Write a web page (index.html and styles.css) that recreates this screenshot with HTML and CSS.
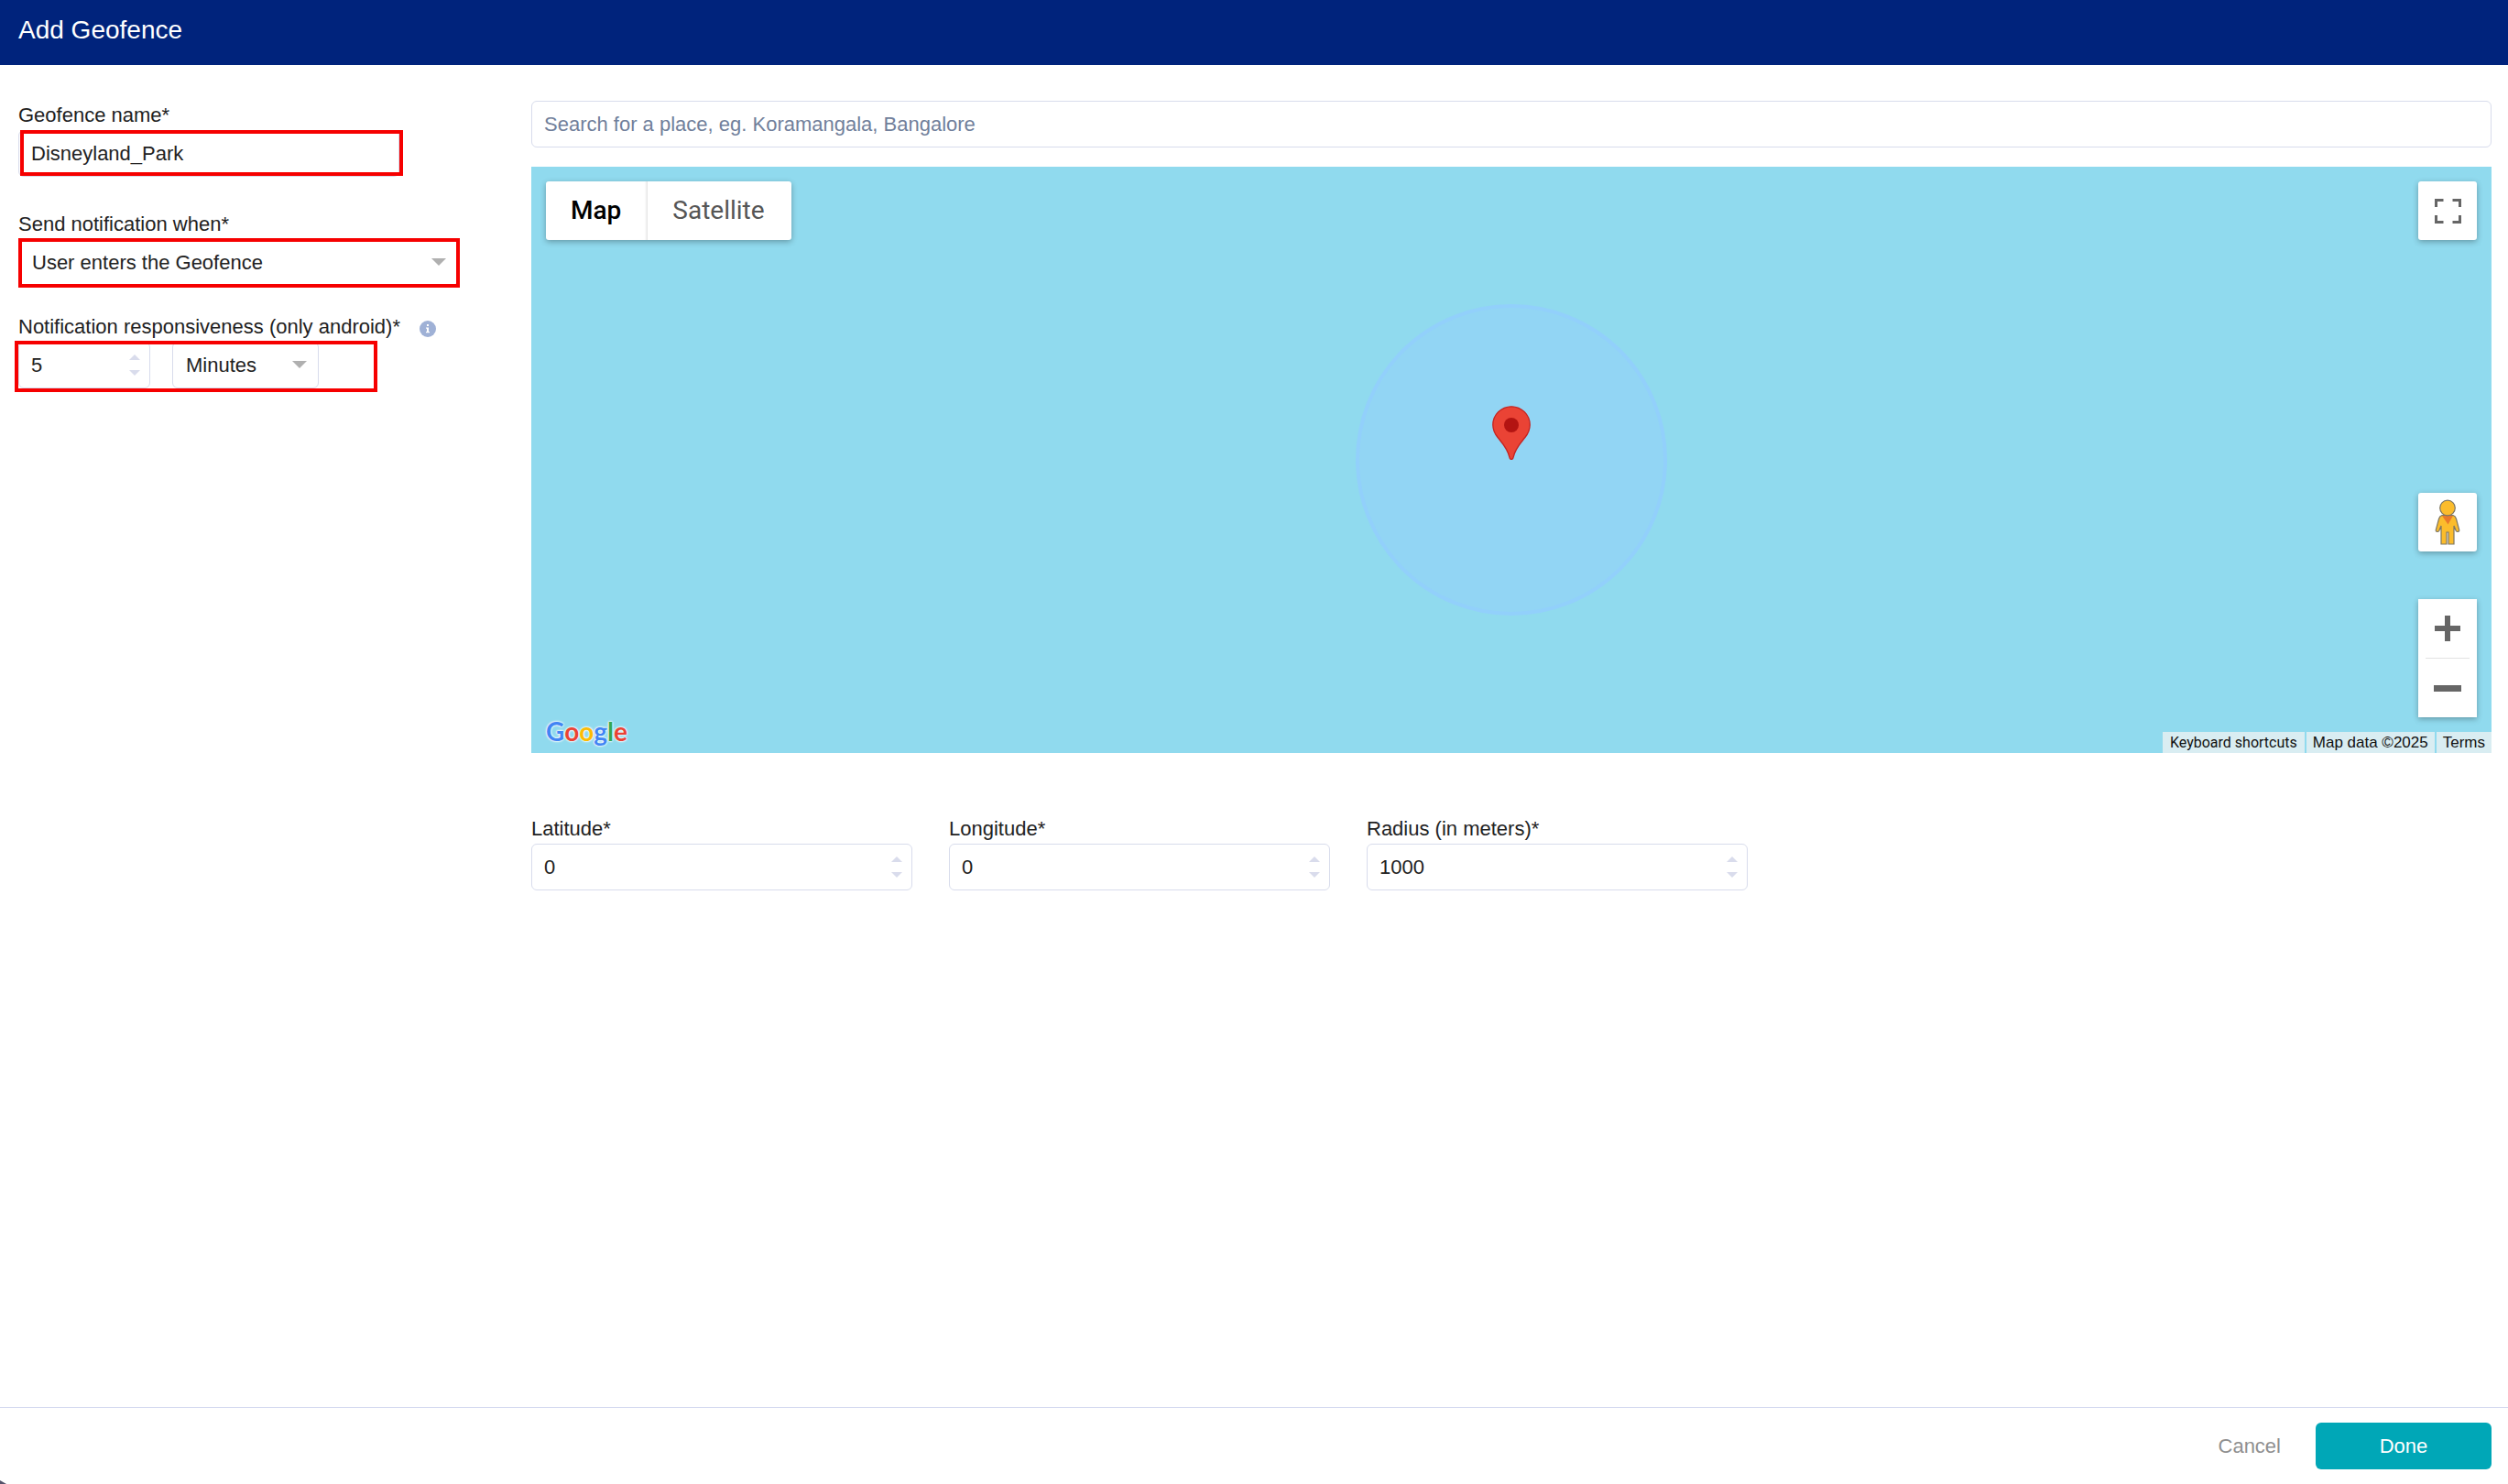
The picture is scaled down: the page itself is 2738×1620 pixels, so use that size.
FILE: index.html
```html
<!DOCTYPE html>
<html lang="en">
<head>
<meta charset="utf-8">
<meta name="viewport" content="width=device-width, initial-scale=1">
<title>Add Geofence</title>
<link rel="stylesheet" href="styles.css">
</head>
<body>
<form class="dialog">
  <header class="dialog-header"><h1>Add Geofence</h1></header>

  <main class="dialog-body">
    <section class="settings">
      <div class="field">
        <label for="name">Geofence name*</label>
        <div class="marked marked-name">
          <input class="box" id="name" type="text" value="Disneyland_Park">
        </div>
      </div>
      <div class="field field-trigger">
        <label for="trigger">Send notification when*</label>
        <div class="marked marked-trigger select-wrap">
          <select class="box" id="trigger"><option>User enters the Geofence</option></select>
        </div>
      </div>
      <div class="field">
        <div class="label-row">
          <label for="delay">Notification responsiveness (only android)*</label>
          <svg class="info" viewBox="0 0 18 18" aria-hidden="true"><circle cx="9" cy="9" r="9" fill="#9fb1d6"/><path d="M8 4h2v2H8zM7 7.500h3V12h1v1.300H7V12h1V8.800H7z" fill="#fff"/></svg>
        </div>
        <div class="marked marked-delay delay">
          <div class="box number delay-value">
            <input id="delay" type="number" value="5">
            <span class="stepper"><button type="button" class="up" aria-label="Increase"></button><button type="button" class="down" aria-label="Decrease"></button></span>
          </div>
          <div class="select-wrap delay-unit">
            <select class="box" aria-label="Unit"><option>Minutes</option></select>
          </div>
        </div>
      </div>
    </section>

    <section class="place">
      <input class="box search" type="search" aria-label="Search for a place" placeholder="Search for a place, eg. Koramangala, Bangalore">

      <div class="map">
        <div class="radius"></div>
        <svg class="pin" viewBox="0 0 42 59" aria-hidden="true"><path d="M21 .8C9.800.8.8 9.700.8 20.700c0 5.500 2.100 9.800 5.300 13.800 4.600 5.700 11 12.600 12.700 21.500.3 1.600 1 2.500 2.200 2.500s1.900-.9 2.200-2.500C24.900 47.100 31.300 40.200 35.900 34.500c3.200-4 5.300-8.300 5.300-13.800C41.200 9.700 32.200.8 21 .8z" fill="#ea4335" stroke="#c5221f" stroke-width="1.300"/><circle cx="21" cy="21" r="8" fill="#b31412"/></svg>

        <div class="map-types">
          <button type="button" class="active">Map</button>
          <button type="button">Satellite</button>
        </div>

        <button type="button" class="control fullscreen" aria-label="Fullscreen">
          <svg width="29" height="27" viewBox="0 0 29 27"><path d="M1.500 9V1.500h8M19.500 1.500h8V9M27.500 18v7.500h-8M9.500 25.500h-8V18" fill="none" stroke="#666" stroke-width="3"/></svg>
        </button>

        <div class="controls">
          <button type="button" class="control" aria-label="Street View">
            <svg class="pegman" width="28" height="50" viewBox="0 0 28 50"><path d="M8 17.500h12c2 .6 3 2 3.500 4l3.300 12.300c.2 1.700-2.300 2.400-3.500.8L21 29V49h-6V36h-2v13H7V29l-2.300 5.600c-1.200 1.600-3.700.9-3.500-.8L4.500 21.500c.5-2 1.500-3.400 3.500-4z" fill="#fbbc2c" stroke="#7d7663" stroke-width="1.200"/><path d="M8 18h12l-5.500 9.500z" fill="#e8792b"/><circle cx="14" cy="9.500" r="8.300" fill="#fbbc2c" stroke="#7d7663" stroke-width="1.200"/></svg>
          </button>
          <div class="zoom">
            <button type="button" aria-label="Zoom in"><svg width="30" height="28" viewBox="0 0 30 28"><path d="M12 0h6v11h11v6H18v11h-6V17H1v-6h11z" fill="#666"/></svg></button>
            <hr>
            <button type="button" aria-label="Zoom out"><svg width="30" height="28" viewBox="0 0 30 28"><path d="M0 11h30v7H0z" fill="#666"/></svg></button>
          </div>
        </div>

        <a class="logo" href="#" aria-label="Google"><span class="b">G</span><span class="r">o</span><span class="y">o</span><span class="b">g</span><span class="g">l</span><span class="r">e</span></a>
        <div class="credits">
          <button type="button">Keyboard shortcuts</button>
          <span>Map data ©2025</span>
          <a href="#">Terms</a>
        </div>
      </div>

      <div class="coordinates">
        <div class="field">
          <label for="lat">Latitude*</label>
          <div class="box number"><input id="lat" type="number" value="0"><span class="stepper"><button type="button" class="up" aria-label="Increase"></button><button type="button" class="down" aria-label="Decrease"></button></span></div>
        </div>
        <div class="field">
          <label for="lng">Longitude*</label>
          <div class="box number"><input id="lng" type="number" value="0"><span class="stepper"><button type="button" class="up" aria-label="Increase"></button><button type="button" class="down" aria-label="Decrease"></button></span></div>
        </div>
        <div class="field">
          <label for="radius">Radius (in meters)*</label>
          <div class="box number"><input id="radius" type="number" value="1000"><span class="stepper"><button type="button" class="up" aria-label="Increase"></button><button type="button" class="down" aria-label="Decrease"></button></span></div>
        </div>
      </div>
    </section>
  </main>

  <footer class="dialog-footer">
    <button type="button" class="cancel">Cancel</button>
    <button type="submit" class="done">Done</button>
  </footer>
  <div class="corner"></div>
</form>
</body>
</html>
```
FILE: styles.css
```css
* { box-sizing: border-box; }

body {
  margin: 0;
  background: #fff;
  color: #222;
  font: 22px/32px "Liberation Sans", Arial, sans-serif;
}

button, input, select {
  margin: 0;
  padding: 0;
  border: 0;
  background: none;
  color: inherit;
  font: inherit;
}

.dialog {
  position: relative;
  display: flex;
  flex-direction: column;
  min-height: 100vh;
}

.dialog-header {
  padding: 15px 20px 20px;
  background: #00237c;
  color: #fff;
}

.dialog-header h1 {
  margin: 0;
  font-size: 28px;
  font-weight: 400;
  line-height: 36px;
}

.dialog-body {
  flex: 1;
  display: grid;
  grid-template-columns: 480px 1fr;
  gap: 80px;
  padding: 39px 18px 39px 20px;
}

/* Form fields */
.settings {
  display: flex;
  flex-direction: column;
  gap: 29px;
}

.field label { display: block; }

.field-trigger { margin-top: 7px; }

.box {
  display: block;
  width: 100%;
  height: 51px;
  padding: 0 13px;
  border: 1px solid #d8dcec;
  border-radius: 6px;
  background: #fff;
  outline: 0;
}

select.box {
  appearance: none;
  padding: 0 14px;
}

.select-wrap { position: relative; }

.select-wrap::before {
  content: "";
  position: absolute;
  right: 13px;
  top: 21px;
  border: 8px solid transparent;
  border-top-color: #b0b0b0;
  border-bottom: 0;
}

.number {
  display: flex;
  align-items: center;
  padding-right: 10px;
}

.number input {
  flex: 1;
  min-width: 0;
  outline: 0;
  appearance: textfield;
}

.number input::-webkit-inner-spin-button { appearance: none; margin: 0; }

.stepper {
  display: flex;
  flex-direction: column;
  gap: 11px;
}

.stepper button {
  width: 12px;
  height: 6px;
  background: #d9dcec;
}

.stepper .up { clip-path: polygon(50% 0, 100% 100%, 0 100%); }
.stepper .down { clip-path: polygon(0 0, 100% 0, 50% 100%); }

.label-row {
  display: flex;
  align-items: center;
  gap: 21px;
}

.info {
  width: 18px;
  height: 18px;
  margin-top: 3px;
}

.delay {
  display: flex;
  gap: 24px;
}

.delay-value { width: 144px; }
.delay-unit { width: 160px; }

/* Red highlight frames laid over the fields */
.marked { position: relative; }

.marked::after {
  content: "";
  position: absolute;
  border: 4px solid #f60000;
  pointer-events: none;
}

.marked-name { width: 416px; }
.marked-name::after { inset: 0 -4px 1px 2px; }
.marked-trigger::after { inset: -1px -2px -2px 0; }
.marked-delay { width: 392px; }
.marked-delay::after { inset: -1px 0 -4px -4px; }

/* Map */
.search {
  appearance: none;
  margin-bottom: 21px;
}

.search::placeholder { color: #717f9b; opacity: 1; }

.map {
  position: relative;
  height: 640px;
  overflow: hidden;
  background: #90daee;
  font-family: Roboto, sans-serif;
}

.radius {
  position: absolute;
  left: calc(50% - 170px);
  top: calc(50% - 170px);
  width: 340px;
  height: 340px;
  border: 4px solid #92d0fb;
  border-radius: 50%;
  background: #92d5f4;
}

.pin {
  position: absolute;
  left: calc(50% - 21px);
  bottom: 50%;
  width: 42px;
  height: 59px;
}

.map-types {
  position: absolute;
  left: 16px;
  top: 16px;
  display: flex;
  border-radius: 3px;
  background: #fff;
  box-shadow: 0 2px 6px rgba(0, 0, 0, .3);
}

.map-types button {
  height: 64px;
  padding: 0 29px 0 27px;
  color: #565656;
  font-size: 28px;
}

.map-types .active {
  color: #000;
  font-weight: 500;
  box-shadow: inset -3px 0 3px -2px rgba(0, 0, 0, .15);
}

.control, .zoom {
  border-radius: 3px;
  background: #fff;
  box-shadow: 0 2px 6px rgba(0, 0, 0, .3);
}

.control, .zoom button {
  display: flex;
  align-items: center;
  justify-content: center;
  width: 64px;
  height: 64px;
}

.fullscreen {
  position: absolute;
  right: 16px;
  top: 16px;
}

.controls {
  position: absolute;
  right: 16px;
  bottom: 39px;
  display: flex;
  flex-direction: column;
  gap: 52px;
}

.zoom { border-radius: 0; }

.zoom hr {
  width: 48px;
  height: 1px;
  margin: 0 auto;
  border: 0;
  background: #e2e2e2;
}

.logo {
  position: absolute;
  left: 16px;
  bottom: 6px;
  font: 700 28px/36px Lato, sans-serif;
  text-decoration: none;
  text-shadow: 0 0 2px #fff, 0 0 2px #fff, 0 0 3px #fff;
}

.logo .b { color: #4285f4; }
.logo .r { color: #ea4335; }
.logo .y { color: #fbbc05; }
.logo .g { color: #34a853; }

.credits {
  position: absolute;
  right: 0;
  bottom: 0;
  display: flex;
  gap: 2px;
  color: #111;
  font-size: 16px;
  line-height: 23px;
}

.credits > * {
  padding: 0 8px;
  background: #d9edf2;
  color: inherit;
  text-decoration: none;
}

.credits span, .credits a {
  padding: 0 7px;
  font-family: "Liberation Sans", Arial, sans-serif;
  font-size: 17px;
}

.coordinates {
  display: flex;
  gap: 40px;
  margin-top: 67px;
}

.coordinates .field { flex: 0 1 416px; }

/* Footer */
.dialog-footer {
  display: flex;
  justify-content: flex-end;
  gap: 16px;
  padding: 16px 18px;
  border-top: 1px solid #d5daf0;
}

.dialog-footer button {
  height: 51px;
  border-radius: 6px;
}

.cancel {
  padding: 0 22px;
  color: #8f8f8f;
}

.done {
  width: 192px;
  background: #00a7b7;
  color: #fff;
}

/* Rounded window edge in the lower left */
.corner {
  position: absolute;
  left: 0;
  bottom: 0;
  width: 7px;
  height: 4px;
  background: #55536a;
  clip-path: polygon(0 0, 50% 50%, 100% 100%, 0 100%);
}
```
